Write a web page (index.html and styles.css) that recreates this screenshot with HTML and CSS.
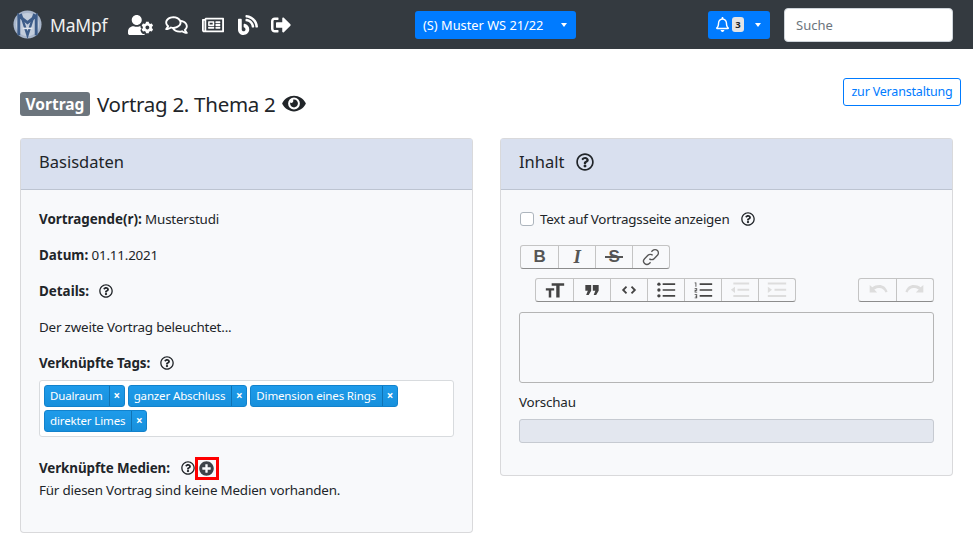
FILE: index.html
```html
<!DOCTYPE html>
<html lang="de">
<head>
<meta charset="utf-8">
<title>MaMpf</title>
<link rel="stylesheet" href="styles.css">
</head>
<body>
<svg class="defs" aria-hidden="true">
  <symbol id="q" viewBox="0 0 512 512"><path d="M256 8C119.043 8 8 119.083 8 256c0 136.997 111.043 248 248 248s248-111.003 248-248C504 119.083 392.957 8 256 8zm0 448c-110.532 0-200-89.431-200-200 0-110.495 89.472-200 200-200 110.491 0 200 89.471 200 200 0 110.53-89.431 200-200 200zm107.244-255.2c0 67.052-72.421 68.084-72.421 92.863V300c0 6.627-5.373 12-12 12h-45.647c-6.627 0-12-5.373-12-12v-8.659c0-35.745 27.1-50.034 47.579-61.516 17.561-9.845 28.324-16.541 28.324-29.579 0-17.246-21.999-28.693-39.784-28.693-23.189 0-33.894 10.977-48.942 29.969-4.057 5.12-11.46 6.071-16.666 2.124l-27.824-21.098c-5.107-3.872-6.251-11.066-2.644-16.363C184.846 131.491 214.94 112 261.794 112c49.071 0 101.45 38.304 101.45 88.8zM298 368c0 23.159-18.841 42-42 42s-42-18.841-42-42 18.841-42 42-42 42 18.841 42 42z"/></symbol>
</svg>
<nav class="navbar">
  <a class="brand">
    <svg class="logo" viewBox="0 0 30 30"><circle cx="15" cy="15" r="14.5" fill="#a9b6cb"/><circle cx="15" cy="15" r="12" fill="#c3cddc"/><path d="M6 26V6l9 7 9-7v20" fill="none" stroke="#3d5c89" stroke-width="3"/><path d="M8 4l7 22 7-22" fill="none" stroke="#3d5c89" stroke-width="2.400"/><path d="M10 19h10" stroke="#e4e9f0" stroke-width="1.600"/></svg>
    <span>MaMpf</span>
  </a>
  <div class="nav-icons">
    <svg class="ni ni-user" viewBox="0 0 640 512"><path d="M610.5 341.3c2.6-14.1 2.6-28.5 0-42.6l25.8-14.9c3-1.7 4.3-5.2 3.3-8.5-6.7-21.5-18.2-41-33.2-57.1-2.3-2.5-6-3.1-9-1.4l-25.8 14.9c-10.9-9.3-23.4-16.5-36.9-21.3v-29.8c0-3.4-2.4-6.4-5.7-7.1-22.3-5-45-4.8-66.2 0-3.3.7-5.7 3.7-5.7 7.1v29.8c-13.5 4.8-26 12-36.9 21.3l-25.8-14.9c-2.9-1.7-6.7-1.1-9 1.4-15 16.1-26.5 35.6-33.2 57.1-1 3.3.4 6.8 3.3 8.5l25.8 14.9c-2.6 14.1-2.6 28.5 0 42.6l-25.8 14.9c-3 1.7-4.3 5.2-3.3 8.5 6.7 21.5 18.2 40.9 33.2 57.1 2.3 2.5 6 3.1 9 1.4l25.8-14.9c10.9 9.3 23.4 16.5 36.9 21.3v29.8c0 3.4 2.4 6.4 5.7 7.1 22.3 5 45 4.8 66.2 0 3.3-.7 5.7-3.7 5.7-7.1v-29.8c13.5-4.8 26-12 36.9-21.3l25.8 14.9c2.9 1.7 6.7 1.1 9-1.4 15-16.1 26.5-35.6 33.2-57.1 1-3.3-.4-6.8-3.3-8.5l-25.8-14.9zM496 368.5c-26.8 0-48.5-21.8-48.5-48.5s21.8-48.5 48.5-48.5 48.5 21.8 48.5 48.5-21.7 48.5-48.5 48.5zM224 256c70.7 0 128-57.3 128-128S294.7 0 224 0 96 57.3 96 128s57.3 128 128 128zm201.2 226.5c-2.3-1.2-4.6-2.6-6.8-3.9l-7.9 4.6c-6 3.4-12.8 5.3-19.6 5.3-10.9 0-21.4-4.6-28.9-12.6-18.3-19.8-32.3-43.9-40.2-69.6-5.5-17.7 1.9-36.4 17.9-45.7l7.9-4.6c-.1-2.6-.1-5.2 0-7.8l-7.9-4.6c-16-9.2-23.4-28-17.9-45.7.9-2.9 2.2-5.8 3.2-8.7-3.8-.3-7.5-1.2-11.4-1.2h-16.7c-22.2 10.2-46.9 16-72.9 16s-50.6-5.8-72.9-16h-16.7C60.2 288 0 348.2 0 422.4V464c0 26.5 21.5 48 48 48h352c10.1 0 19.5-3.2 27.2-8.5-1.2-3.8-2-7.7-2-11.8v-9.2z"/></svg>
    <svg class="ni ni-comments" viewBox="0 0 576 512"><path d="M532 386.2c27.5-27.1 44-61.1 44-98.2 0-80-76.5-146.1-176.2-157.9C368.3 72.5 294.3 32 208 32 93.1 32 0 103.6 0 192c0 37 16.5 71 44 98.2-15.3 30.7-37.3 54.5-37.7 54.9-6.3 6.7-8.1 16.5-4.4 25 3.6 8.5 12 14 21.2 14 53.5 0 96.7-20.2 125.2-38.8 9.2 2.1 18.7 3.7 28.4 4.9C208.1 407.6 281.8 448 368 448c20.8 0 40.8-2.4 59.8-6.8C456.3 459.7 499.4 480 553 480c9.2 0 17.5-5.5 21.2-14 3.6-8.5 1.9-18.3-4.4-25-.4-.3-22.5-24.1-37.8-54.8zm-392.8-92.3L122.1 305c-14.1 9.1-28.5 16.3-43.1 21.4 2.7-4.7 5.4-9.7 8-14.8l15.5-31.1L77.7 256C64.2 242.6 48 220.7 48 192c0-60.7 73.3-112 160-112s160 51.3 160 112-73.3 112-160 112c-16.5 0-33-1.9-49-5.6l-19.8-4.5zM498.3 352l-24.7 24.4 15.5 31.1c2.6 5.1 5.3 10.1 8 14.8-14.6-5.1-29-12.3-43.1-21.4l-17.1-11.1-19.9 4.6c-16 3.7-32.5 5.6-49 5.6-54 0-102.2-20.1-131.3-49.7C338 339.5 416 272.9 416 192c0-3.4-.4-6.7-.7-10C479.7 196.5 528 238.8 528 288c0 28.7-16.2 50.6-29.7 64z"/></svg>
    <svg class="ni ni-news" viewBox="0 0 576 512"><path d="M552 64H112c-20.858 0-38.643 13.377-45.248 32H24c-13.255 0-24 10.745-24 24v272c0 30.928 25.072 56 56 56h496c13.255 0 24-10.745 24-24V88c0-13.255-10.745-24-24-24zM48 392V144h16v248c0 4.411-3.589 8-8 8s-8-3.589-8-8zm480 8H111.422c.374-2.614.578-5.283.578-8V112h416v288zM172 280h136c6.627 0 12-5.373 12-12v-96c0-6.627-5.373-12-12-12H172c-6.627 0-12 5.373-12 12v96c0 6.627 5.373 12 12 12zm28-80h80v40h-80v-40zm-40 140v-24c0-6.627 5.373-12 12-12h136c6.627 0 12 5.373 12 12v24c0 6.627-5.373 12-12 12H172c-6.627 0-12-5.373-12-12zm192 0v-24c0-6.627 5.373-12 12-12h104c6.627 0 12 5.373 12 12v24c0 6.627-5.373 12-12 12H364c-6.627 0-12-5.373-12-12zm0-144v-24c0-6.627 5.373-12 12-12h104c6.627 0 12 5.373 12 12v24c0 6.627-5.373 12-12 12H364c-6.627 0-12-5.373-12-12zm0 72v-24c0-6.627 5.373-12 12-12h104c6.627 0 12 5.373 12 12v24c0 6.627-5.373 12-12 12H364c-6.627 0-12-5.373-12-12z"/></svg>
    <svg class="ni ni-blog" viewBox="0 0 512 512"><path d="M172.2 226.8c-14.6-2.9-28.2 8.9-28.2 23.8V301c0 10.2 7.1 18.4 16.7 22 18.2 6.8 31.3 24.4 31.3 45 0 26.5-21.5 48-48 48s-48-21.5-48-48V120c0-13.3-10.7-24-24-24H24c-13.3 0-24 10.7-24 24v248c0 89.5 82.1 160.2 175 140.7 54.4-11.4 98.3-55.4 109.7-109.7 17.4-82.9-37-157.2-112.5-172.2zM209 0c-9.2-.5-17 6.8-17 16v31.6c0 8.5 6.6 15.5 15 15.9 129.4 7 233.4 112 240.9 241.5.5 8.4 7.5 15 15.9 15h32.1c9.2 0 16.5-7.8 16-17C503.4 139.8 372.2 8.6 209 0zm.3 96c-9.3-.7-17.3 6.7-17.3 16.1v32.1c0 8.4 6.5 15.3 14.8 15.9 76.8 6.3 138 68.2 144.9 145.2.8 8.3 7.6 14.7 15.9 14.7h32.2c9.3 0 16.8-8 16.1-17.3-8.4-110.1-96.5-198.2-206.6-206.7z"/></svg>
    <svg class="ni ni-out" viewBox="0 0 512 512"><path d="M497 273L329 441c-15 15-41 4.5-41-17v-96H152c-13.3 0-24-10.7-24-24v-96c0-13.3 10.7-24 24-24h136V88c0-21.4 25.9-32 41-17l168 168c9.3 9.4 9.3 24.6 0 34zM192 436v-40c0-6.6-5.4-12-12-12H96c-17.7 0-32-14.3-32-32V160c0-17.7 14.3-32 32-32h84c6.6 0 12-5.4 12-12V76c0-6.6-5.4-12-12-12H96c-53 0-96 43-96 96v192c0 53 43 96 96 96h84c6.6 0 12-5.4 12-12z"/></svg>
  </div>
  <button class="btn-blue btn-course">(S) Muster WS 21/22<i class="caret"></i></button>
  <button class="btn-blue btn-bell">
    <svg class="bell" viewBox="0 0 448 512"><path d="M439.39 362.29c-19.32-20.76-55.47-51.99-55.47-154.29 0-77.7-54.48-139.9-127.94-155.16V32c0-17.67-14.32-32-31.98-32s-31.98 14.33-31.98 32v20.84C118.56 68.1 64.08 130.3 64.08 208c0 102.3-36.15 133.53-55.47 154.29-6 6.45-8.66 14.16-8.61 21.71.11 16.4 12.98 32 32.1 32h383.8c19.12 0 32-15.6 32.1-32 .05-7.55-2.61-15.27-8.61-21.71zM67.53 368c21.22-27.97 44.42-74.33 44.53-159.42 0-.2-.06-.38-.06-.58 0-61.86 50.14-112 112-112s112 50.14 112 112c0 .2-.06.38-.06.58.11 85.1 23.31 131.46 44.53 159.42H67.53zM224 512c35.32 0 63.97-28.65 63.97-64H160.03c0 35.35 28.65 64 63.97 64z"/></svg>
    <span class="count">3</span><i class="caret"></i>
  </button>
  <input class="search" placeholder="Suche">
</nav>
<main class="page">
  <div class="title-row">
    <h1 class="title"><span class="badge">Vortrag</span><span>Vortrag 2. Thema 2</span>
      <svg class="eye" viewBox="0 0 576 512"><path d="M572.52 241.4C518.29 135.59 410.93 64 288 64S57.68 135.64 3.48 241.41a32.35 32.35 0 0 0 0 29.19C57.71 376.41 165.07 448 288 448s230.32-71.64 284.52-177.41a32.35 32.35 0 0 0 0-29.19zM288 400a144 144 0 1 1 144-144 143.93 143.93 0 0 1-144 144zm0-240a95.31 95.31 0 0 0-25.31 3.79 47.85 47.85 0 0 1-66.9 66.9A95.78 95.78 0 1 0 288 160z"/></svg>
    </h1>
    <a class="btn-outline">zur Veranstaltung</a>
  </div>
  <div class="cards">
    <section class="card">
      <header class="card-head">Basisdaten</header>
      <div class="card-body left-body">
        <p class="line"><b>Vortragende(r):</b> Musterstudi</p>
        <p class="line"><b>Datum:</b> 01.11.2021</p>
        <p class="line"><b>Details:</b><svg class="q q-gap"><use href="#q"/></svg></p>
        <p class="line">Der zweite Vortrag beleuchtet...</p>
        <p class="line line-tags"><b>Verknüpfte Tags:</b><svg class="q q-gap"><use href="#q"/></svg></p>
        <div class="tags">
          <span class="tag">Dualraum<i>×</i></span>
          <span class="tag">ganzer Abschluss<i>×</i></span>
          <span class="tag">Dimension eines Rings<i>×</i></span>
          <span class="tag">direkter Limes<i>×</i></span>
        </div>
        <div class="media-head"><b>Verknüpfte Medien:</b><svg class="q q-gap-m"><use href="#q"/></svg>
          <span class="redbox"><svg class="plus" viewBox="0 0 512 512"><path d="M256 8C119 8 8 119 8 256s111 248 248 248 248-111 248-248S393 8 256 8zm144 276c0 6.6-5.4 12-12 12h-92v92c0 6.6-5.4 12-12 12h-56c-6.6 0-12-5.4-12-12v-92h-92c-6.6 0-12-5.4-12-12v-56c0-6.6 5.4-12 12-12h92v-92c0-6.6 5.4-12 12-12h56c6.6 0 12 5.4 12 12v92h92c6.6 0 12 5.4 12 12v56z"/></svg></span>
        </div>
        <p class="media-none">Für diesen Vortrag sind keine Medien vorhanden.</p>
      </div>
    </section>
    <section class="card card-short">
      <header class="card-head">Inhalt<svg class="q q-head"><use href="#q"/></svg></header>
      <div class="card-body right-body">
        <label class="check"><span class="box"></span>Text auf Vortragsseite anzeigen<svg class="q q-check"><use href="#q"/></svg></label>
        <div class="tb-row tb-row1">
          <div class="tb-group">
            <span class="tb tb-b">B</span>
            <span class="tb tb-i">I</span>
            <span class="tb tb-s">S</span>
            <span class="tb"><svg class="ti" viewBox="0 0 24 24" fill="none" stroke="#555" stroke-width="1.600"><path d="M10 14a4 4 0 0 0 5.700 0l4-4a4 4 0 0 0-5.700-5.700l-1.500 1.500M14 10a4 4 0 0 0-5.700 0l-4 4a4 4 0 0 0 5.700 5.700l1.500-1.500"/></svg></span>
          </div>
        </div>
        <div class="tb-row tb-row2">
          <div class="tb-group">
            <span class="tb"><svg class="ti" viewBox="0 0 24 24" fill="#444"><path d="M8 4h15v3h-5.500v14h-4V7H8zM1 10h10v2.500H7.500V21h-3v-8.500H1z"/></svg></span>
            <span class="tb"><svg class="ti" viewBox="0 0 24 24" fill="#444"><path d="M4 6h7v7l-3 5H5l2-5H4zM13 6h7v7l-3 5h-3l2-5h-3z"/></svg></span>
            <span class="tb"><svg class="ti" viewBox="0 0 24 24" fill="none" stroke="#444" stroke-width="2.200"><path d="M9 8l-4 4 4 4M15 8l4 4-4 4"/></svg></span>
            <span class="tb"><svg class="ti" viewBox="0 0 24 24" fill="#444"><circle cx="3.500" cy="5" r="2"/><circle cx="3.500" cy="12" r="2"/><circle cx="3.500" cy="19" r="2"/><path d="M8 4h15v2H8zM8 11h15v2H8zM8 18h15v2H8z"/></svg></span>
            <span class="tb"><svg class="ti" viewBox="0 0 24 24" fill="#444"><path d="M2 3h2v5H3V4H2zM2 10h3v3H3v1h2v1H2v-3h2v-1H2zM2 17h3v5H2v-1h2v-1H3v-1h1v-1H2zM8 4h15v2H8zM8 11h15v2H8zM8 18h15v2H8z"/></svg></span>
            <span class="tb"><svg class="ti" viewBox="0 0 24 24" fill="#ddd"><path d="M4 3h19v2.500H4zM9 10.500h14V13H9zM4 18h19v2.500H4zM1 11.700l5-3.700v7.500z"/></svg></span>
            <span class="tb"><svg class="ti" viewBox="0 0 24 24" fill="#ddd"><path d="M1 3h22v2.500H1zM9 10.500h14V13H9zM1 18h22v2.500H1zM6 11.700L1 8v7.500z"/></svg></span>
          </div>
          <div class="tb-group">
            <span class="tb"><svg class="ti" viewBox="0 0 24 24" fill="#ddd"><path d="M2 6v9h9l-3.500-3.500C9.500 10 11.500 9.500 13.500 9.500c3.500 0 6 1.800 7.500 5.500l2.500-1C21.500 8.500 18 6 13.500 6c-3.200 0-6 1-8.300 2.800z"/></svg></span>
            <span class="tb"><svg class="ti" viewBox="0 0 24 24" fill="#ddd"><path d="M22 6v9h-9l3.500-3.500C14.500 10 12.500 9.500 10.500 9.500 7 9.500 4.500 11.300 3 15L.5 14C2.500 8.500 6 6 10.500 6c3.200 0 6 1 8.300 2.800z"/></svg></span>
          </div>
        </div>
        <div class="editor"></div>
        <div class="prev-label">Vorschau</div>
        <div class="preview"></div>
      </div>
    </section>
  </div>
</main>
</body>
</html>
```
FILE: styles.css
```css
* { box-sizing: border-box; }
html, body { margin: 0; padding: 0; }
body {
  font-family: "Noto Sans", "Open Sans", sans-serif;
  font-size: 13.4px;
  letter-spacing: -0.19px;
  color: #212529;
  background: #fff;
  overflow: hidden;
}
.defs { display: none; }
p { margin: 0; }
b { font-weight: 700; letter-spacing: 0; }

.navbar {
  height: 49px;
  background: #343a40;
  display: flex;
  align-items: center;
  padding-left: 13px;
}
.brand { display: flex; align-items: center; color: #f1f1f1; font-size: 17.500px; width: 115px; }
.logo { width: 29px; height: 29px; margin-right: 8px; }
.nav-icons { display: flex; align-items: center; width: 287px; }
.ni { height: 20px; fill: #fff; flex: none; }
.ni-user { width: 25px; margin-right: 12px; }
.ni-comments { width: 23px; margin-right: 14px; }
.ni-news { width: 22px; margin-right: 14px; }
.ni-blog { width: 20px; margin-right: 13px; }
.ni-out { width: 20px; }
.btn-blue {
  height: 28px;
  background: #007bff;
  color: #fff;
  border: 0;
  border-radius: 3px;
  font: inherit;
  font-size: 12.800px;
  display: flex;
  align-items: center;
  padding: 0 0 0 8px;
}
.btn-course { width: 161px; margin-right: 132px; }
.btn-course .caret { margin-left: 18px; }
.caret { width: 0; height: 0; border: 3.500px solid transparent; border-top: 4px solid #fff; border-bottom: 0; }
.btn-bell { width: 62px; margin-right: 14px; }
.bell { width: 13px; height: 15px; fill: #fff; }
.count {
  background: #e2e3e5;
  color: #212529;
  font-size: 9.500px;
  font-weight: 700;
  border-radius: 3px;
  width: 12px;
  height: 15px;
  line-height: 15px;
  text-align: center;
  margin-left: 3px;
}
.btn-bell .caret { margin-left: 11px; }
.search {
  width: 169px;
  height: 34px;
  border: 1px solid #ced4da;
  border-radius: 4px;
  padding: 0 11px;
  font: inherit;
  font-size: 13px;
  background: #fff;
}
.search::placeholder { color: #6c757d; }

.page { padding: 0 20px; }
.title-row { position: relative; height: 89px; padding-top: 42px; }
.title { margin: 0; font-weight: 400; font-size: 20.500px; letter-spacing: -0.28px; line-height: 24px; color: #212529; display: flex; align-items: center; white-space: nowrap; }
.badge {
  background: #6c757d;
  color: #fff;
  font-size: 15.500px;
  letter-spacing: 0;
  font-weight: 700;
  border-radius: 3px;
  height: 24px;
  width: 70px;
  line-height: 25px;
  text-align: center;
  margin: 1px 7px 0 0;
}
.eye { width: 24px; height: 21px; margin-left: 6px; fill: #212529; }
.btn-outline {
  position: absolute;
  right: -8px;
  top: 29px;
  width: 118px;
  height: 28px;
  border: 1px solid #007bff;
  border-radius: 3px;
  color: #007bff;
  font-size: 12.500px;
  line-height: 26px;
  text-align: center;
}
.cards { display: flex; gap: 27px; align-items: flex-start; }
.card {
  flex: 0 0 453px;
  height: 395px;
  background: #f8f9fb;
  border: 1px solid rgba(0,0,0,.125);
  border-radius: 4px;
}
.card-short { height: 338px; }
.card-head {
  height: 51px;
  background: #d9e0ef;
  border-bottom: 1px solid rgba(0,0,0,.125);
  padding: 0 0 5px 18px;
  font-size: 16.500px;
  letter-spacing: 0;
  display: flex;
  align-items: center;
}
.q { width: 14px; height: 14px; fill: #212529; flex: none; }
.q-gap { margin-left: 10px; vertical-align: -2px; }
.q-gap-m { margin-left: 11px; }
.q-head { width: 18px; height: 18px; margin-left: 12px; }
.q-check { margin-left: 12px; }
.left-body { padding: 20px 18px 0; }
.line { height: 36px; line-height: 18px; }
.line-tags { height: 26px; }
.line-tags b, .media-head b { letter-spacing: -0.1px; }
.tags {
  width: 415px;
  height: 57px;
  background: #fff;
  border: 1px solid #d8dbde;
  border-radius: 3px;
  padding: 4px;
  display: flex;
  flex-wrap: wrap;
  align-content: flex-start;
  gap: 3px;
}
.tag {
  height: 22px;
  background: linear-gradient(#1e9bea, #1790dc);
  border: 1px solid #1282cc;
  border-radius: 3px;
  color: #fff;
  font-size: 11.500px;
  letter-spacing: -0.14px;
  line-height: 20px;
  padding-left: 5px;
  display: flex;
}
.tag i {
  font-style: normal;
  font-weight: 700;
  border-left: 1px solid #1073b4;
  width: 15px;
  text-align: center;
  margin-left: 6px;
}
.media-head { margin-top: 19px; height: 24px; display: flex; align-items: center; }
.redbox {
  width: 24px;
  height: 23px;
  border: 3px solid #f00;
  display: flex;
  align-items: center;
  justify-content: center;
}
.plus { width: 15px; height: 15px; fill: #3d4349; }
.media-none { line-height: 18px; margin-top: 1px; }
.right-body { padding: 20px 18px 0; }
.check { display: flex; align-items: center; height: 18px; letter-spacing: -0.25px; }
.box { width: 14px; height: 14px; background: #fff; border: 1px solid #adb5bd; border-radius: 3px; margin-right: 6px; margin-left: 1px; }
.tb-row { display: flex; }
.tb-row1 { margin: 17px 0 0 1px; }
.tb-row2 { margin: 9px 0 0 16px; width: 399px; justify-content: space-between; }
.tb-group { display: flex; height: 24px; border: 1px solid #c4c4c4; border-bottom-color: #8c8c8c; border-radius: 3px; }
.tb {
  width: 37px;
  display: flex;
  align-items: center;
  justify-content: center;
  border-left: 1px solid #c4c4c4;
  color: #555;
  font-family: "Liberation Sans", sans-serif;
  font-size: 17px;
  font-weight: 700;
}
.tb:first-child { border-left: 0; }
.tb-i { font-family: "Liberation Serif", serif; font-style: italic; font-size: 19px; }
.tb-s { position: relative; }
.tb-s::after { content: ""; position: absolute; left: 9px; right: 9px; top: 10px; height: 2px; background: #555; }
.ti { width: 20px; height: 20px; }
.editor { width: 415px; height: 71px; margin-top: 10px; border: 1px solid #b5b5b5; border-radius: 3px; }
.prev-label { margin-top: 10px; line-height: 18px; }
.preview { width: 415px; height: 24px; margin-top: 8px; background: #e3e7ef; border: 1px solid #c6cad1; border-radius: 3px; }
```
